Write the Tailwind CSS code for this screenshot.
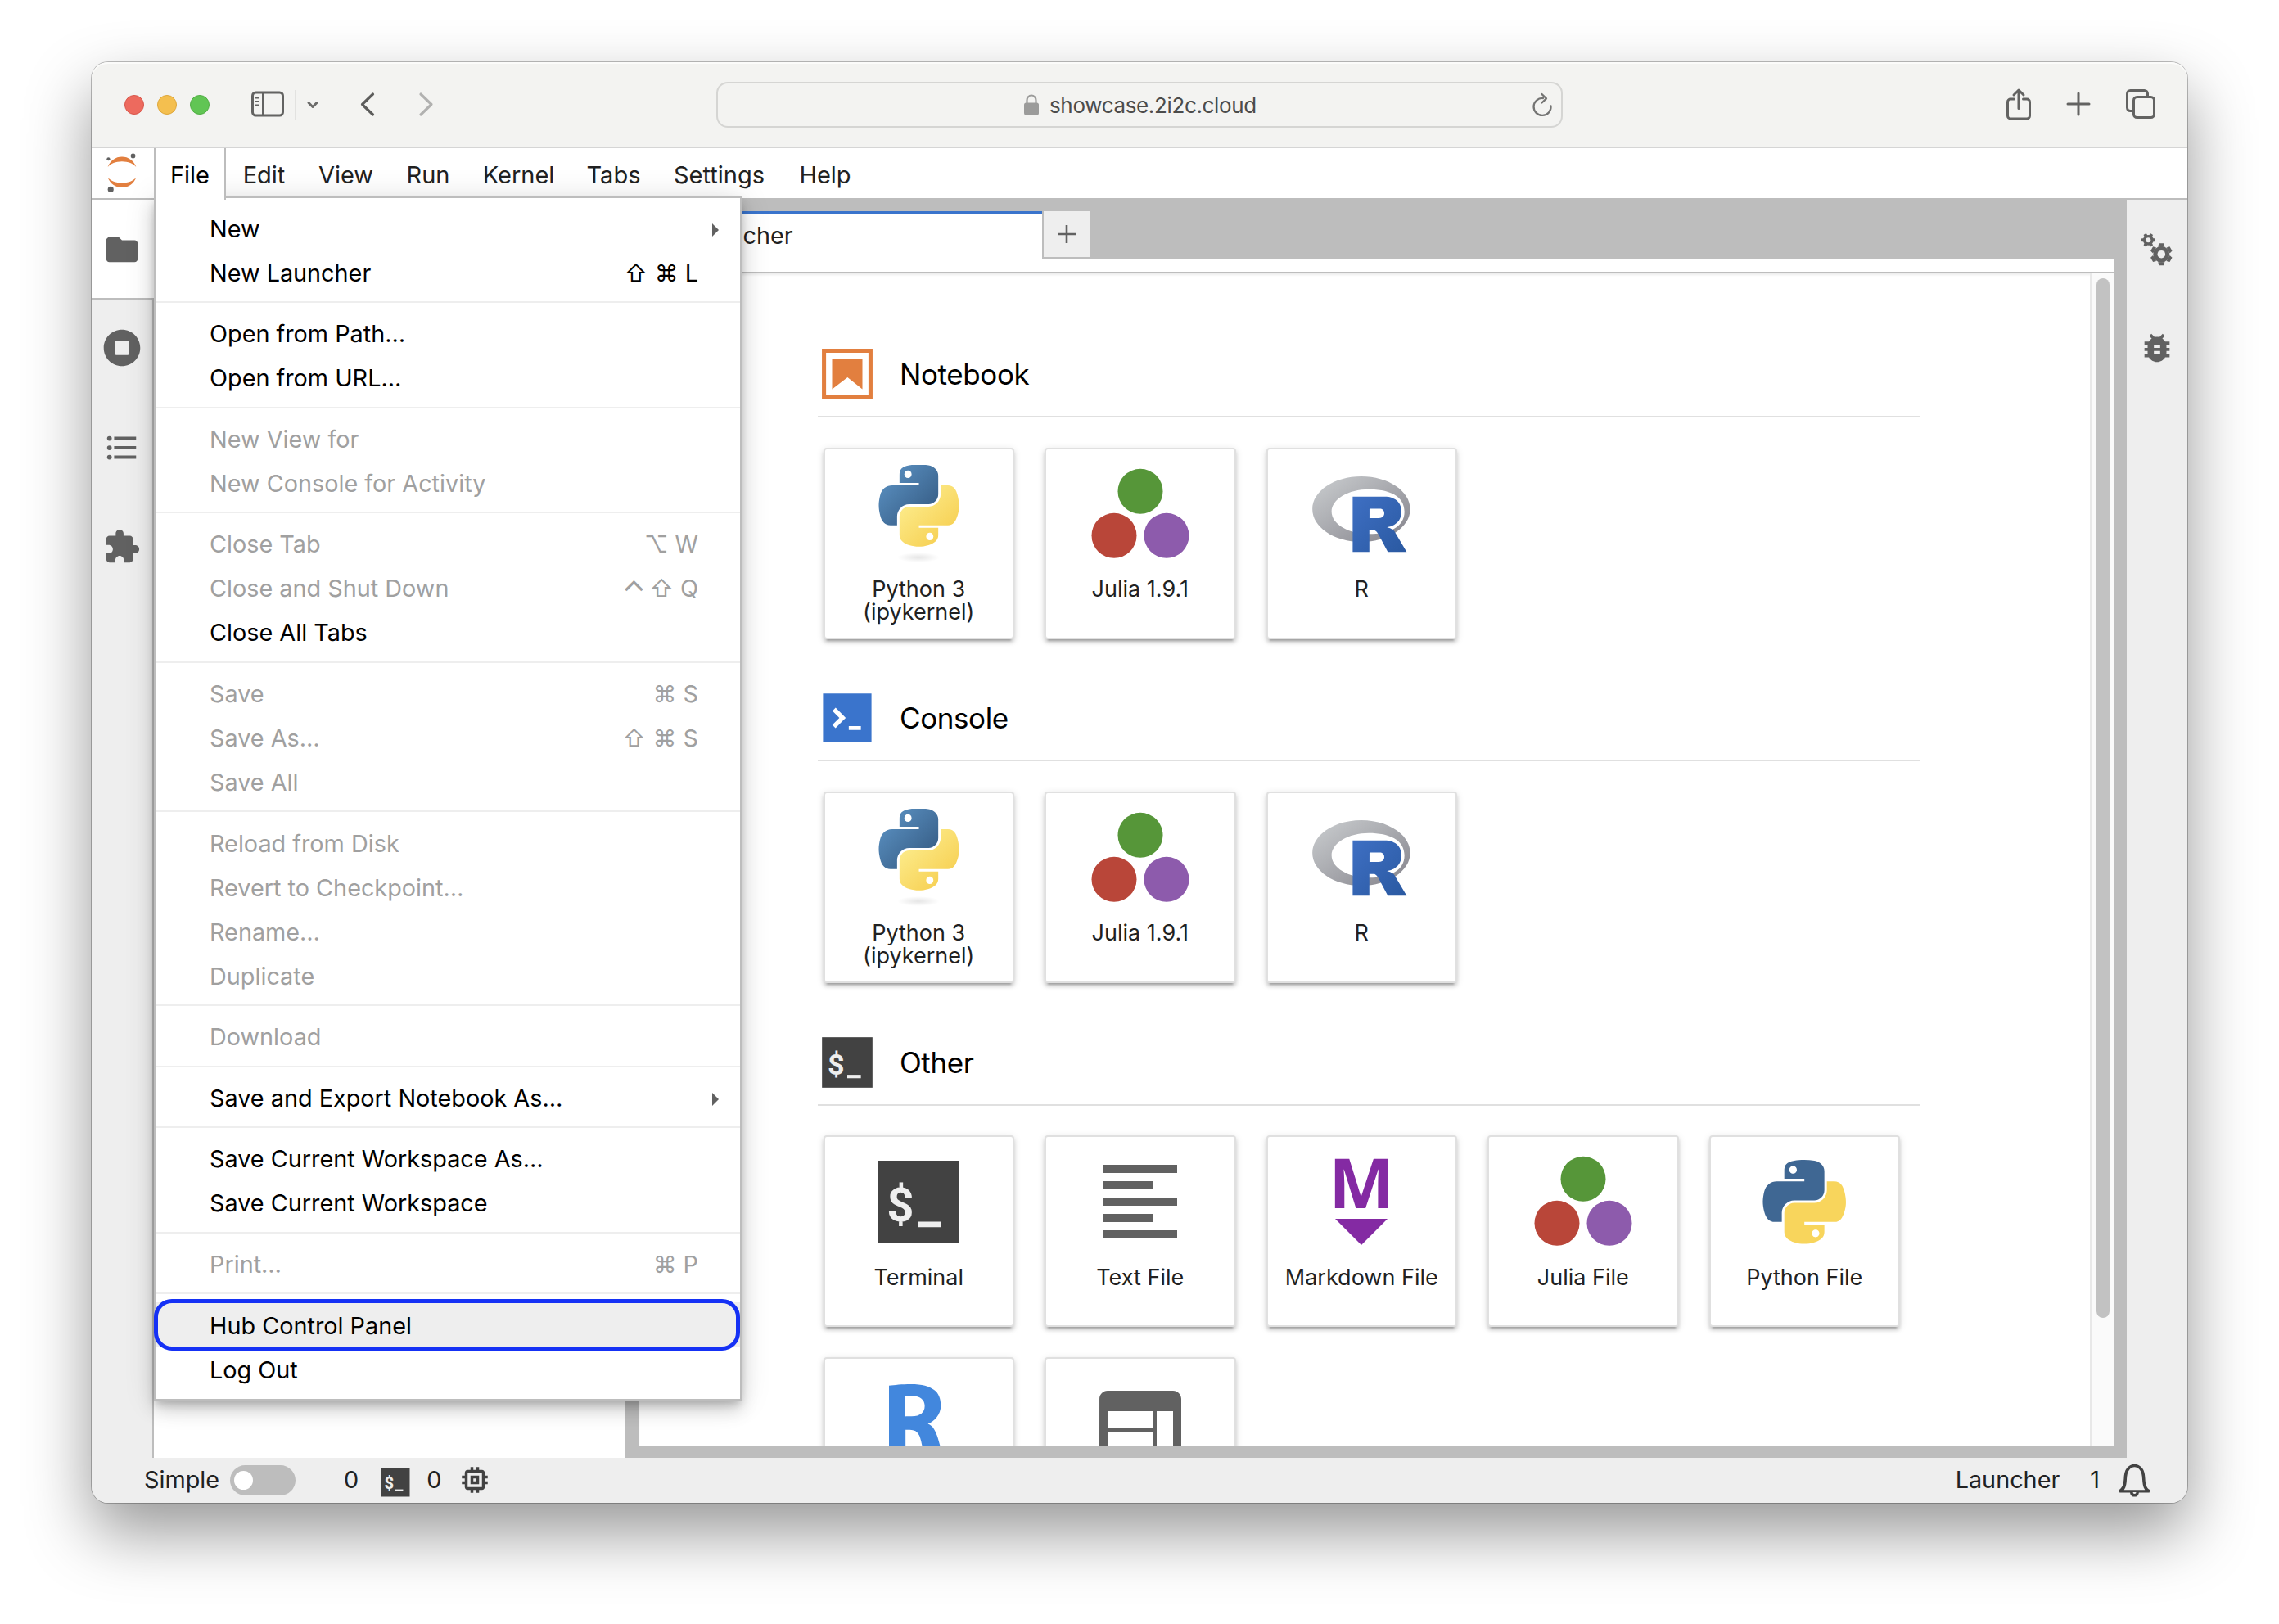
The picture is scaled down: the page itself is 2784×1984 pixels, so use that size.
<!DOCTYPE html>
<html lang="en">
<head>
<meta charset="utf-8">
<title>JupyterLab</title>
<script src="https://cdn.jsdelivr.net/npm/@tailwindcss/browser@4"></script>
</head>
<body class="bg-white font-['Inter',sans-serif] text-[#212121] w-[2784px] h-[1984px] overflow-hidden pt-[76px] pl-[112px]">
<svg width="0" height="0" class="absolute">
  <defs>
    <linearGradient id="pyBlue" x1="0" y1="0" x2="0.75" y2="0.75"><stop offset="0" stop-color="#5f97c9"/><stop offset="1" stop-color="#3c658f"/></linearGradient>
    <linearGradient id="pyYellow" x1="0.2" y1="0.2" x2="0.75" y2="0.8"><stop offset="0" stop-color="#fcea88"/><stop offset="1" stop-color="#f7d257"/></linearGradient>
    <radialGradient id="pyShade"><stop offset="0" stop-color="#000" stop-opacity=".1"/><stop offset="1" stop-color="#000" stop-opacity="0"/></radialGradient>
    <linearGradient id="rGrey" x1="0" y1="0" x2="1" y2="1"><stop offset="0" stop-color="#cbced0"/><stop offset="1" stop-color="#84838b"/></linearGradient>
    <linearGradient id="rBlue" x1="0" y1="0" x2="1" y2="1"><stop offset="0" stop-color="#3e6fc3"/><stop offset="1" stop-color="#2a59a1"/></linearGradient>
    <path id="pyTop" d="M 54.918785,9.1927421e-4 C 50.335132,0.02221727 45.957846,0.41313697 42.106285,1.0946693 30.760069,3.0991731 28.700036,7.2947714 28.700035,15.032169 v 10.21875 h 26.8125 v 3.40625 h -26.8125 -10.0625 c -7.792459,0 -14.6157588,4.683717 -16.7499998,13.59375 -2.46181998,10.212966 -2.57101508,16.586023 0,27.25 1.9059283,7.937852 6.4575432,13.593748 14.2499998,13.59375 h 9.21875 v -12.25 c 0,-8.849902 7.657144,-16.656248 16.75,-16.65625 h 26.78125 c 7.454951,0 13.406253,-6.138164 13.40625,-13.625 v -25.53125 c 0,-7.2663386 -6.12998,-12.7247771 -13.40625,-13.9374997 C 64.281548,0.32794397 59.502438,-0.02037903 54.918785,9.1927421e-4 Z m -14.5,8.21875012579 c 2.769547,0 5.03125,2.2986456 5.03125,5.1249996 -2e-6,2.816336 -2.261703,5.09375 -5.03125,5.09375 -2.779476,-1e-6 -5.03125,-2.277415 -5.03125,-5.09375 -10e-7,-2.826353 2.251774,-5.1249996 5.03125,-5.1249996 z"/>
    <path id="pyBottom" d="m 85.637535,28.657169 v 11.90625 c 0,9.230755 -7.825895,16.999999 -16.75,17 h -26.78125 c -7.335833,0 -13.406249,6.278483 -13.40625,13.625 v 25.531247 c 0,7.266344 6.318588,11.540324 13.40625,13.625004 8.487331,2.49561 16.626237,2.94663 26.78125,0 6.750155,-1.95439 13.406253,-5.88761 13.40625,-13.625004 V 86.500919 h -26.78125 v -3.40625 h 26.78125 13.406254 c 7.792461,0 10.696251,-5.435408 13.406241,-13.59375 2.79933,-8.398886 2.68022,-16.475776 0,-27.25 -1.92578,-7.757441 -5.60387,-13.59375 -13.406241,-13.59375 z m -15.0625,64.65625 c 2.779478,3e-6 5.03125,2.277417 5.03125,5.093747 -2e-6,2.826354 -2.251775,5.125004 -5.03125,5.125004 -2.76955,0 -5.03125,-2.29865 -5.03125,-5.125004 2e-6,-2.81633 2.261697,-5.093747 5.03125,-5.093747 z"/>
    <symbol id="python" viewBox="0 0 120 120">
      <g transform="translate(11.5 -.5) scale(.883 .893)"><use href="#pyTop" fill="url(#pyBlue)"/><use href="#pyBottom" fill="url(#pyYellow)"/></g>
      <ellipse cx="60" cy="113" rx="26" ry="6" fill="url(#pyShade)"/>
    </symbol>
    <symbol id="pythonFile" viewBox="0 0 120 120">
      <g transform="translate(9.5 9) scale(.913)"><use href="#pyTop" fill="#3f6793"/><use href="#pyBottom" fill="#f8d55c"/></g>
    </symbol>
    <symbol id="julia" viewBox="0 0 120 120">
      <circle cx="60" cy="32.3" r="27.5" fill="#569639"/><circle cx="28" cy="86.3" r="27.5" fill="#b94639"/><circle cx="92" cy="86.3" r="27.5" fill="#8d5bac"/>
    </symbol>
    <symbol id="rlogo" viewBox="0 0 724 561">
      <path fill="url(#rGrey)" fill-rule="evenodd" d="M361.453,485.937C162.329,485.937,0.906,377.828,0.906,244.469C0.906,111.109,162.329,3,361.453,3C560.578,3,722,111.109,722,244.469C722,377.828,560.578,485.937,361.453,485.937ZM416.641,97.406C265.289,97.406,142.594,171.314,142.594,262.484C142.594,353.654,265.289,427.562,416.641,427.562C567.992,427.562,679.687,377.033,679.687,262.484C679.687,147.971,567.992,97.406,416.641,97.406Z"/>
      <path fill="url(#rBlue)" fill-rule="evenodd" d="M550,377C550,377,571.822,383.585,584.5,390C588.899,392.226,596.51,396.668,602,402.5C607.378,408.212,610,414,610,414L696,559L557,559.062L492,437C492,437,478.69,414.131,470.5,407.5C463.668,401.969,460.755,400,454,400C449.298,400,420.974,400,420.974,400L421,558.974L298,559.026L298,152.938L545,152.938C545,152.938,657.5,154.967,657.5,262C657.5,369.033,550,377,550,377ZM496.5,241.024L422.037,240.976L422,310.026L496.5,310.002C496.5,310.002,531,309.895,531,274.877C531,239.155,496.5,241.024,496.5,241.024Z"/>
    </symbol>
    <symbol id="terminal" viewBox="0 0 24 24">
      <rect x="2" y="2" width="20" height="20" fill="#424242"/>
      <text x="4.25" y="16.8" font-family="Roboto" font-weight="700" font-size="11.6" fill="#eee">$</text>
      <rect x="12" y="16.9" width="5.4" height="1.35" fill="#eee"/>
    </symbol>
  </defs>
</svg>

<div class="relative flex h-[1760px] w-[2560px] flex-col rounded-[20px] bg-[#eee] shadow-[0_0_0_1px_rgba(0,0,0,0.25),0_36px_80px_rgba(0,0,0,0.41)]">
  <!-- browser toolbar -->
  <div class="flex h-[105px] shrink-0 items-center rounded-t-[20px] border-b border-[#d5d5d5] bg-[#f3f3f1] shadow-[inset_0_2px_0_#fbfbfa]">
    <div class="ml-10 flex gap-4">
      <div class="size-6 rounded-full border border-[#d8574c] bg-[#ed6a5e]"></div>
      <div class="size-6 rounded-full border border-[#dea73c] bg-[#f4bf4f]"></div>
      <div class="size-6 rounded-full border border-[#52ae45] bg-[#61c554]"></div>
    </div>
    <svg class="mt-[-2px] ml-[51px] h-[32px] w-[40px]" viewBox="0 0 40 32" fill="none" stroke="#636362" stroke-width="3"><rect x="1.5" y="2" width="37" height="28" rx="4"/><path d="M14.5 2v28"/><path d="M5 8.500h5M5 13h5M5 17.500h5" stroke-width="2"/></svg>
    <div class="ml-[13px] h-9 w-[2px] bg-[#e2e2e0]"></div>
    <svg class="ml-3 h-3 w-4" viewBox="0 0 16 12" fill="none" stroke="#6b6b6a" stroke-width="3" stroke-linecap="round" stroke-linejoin="round"><path d="M3 3.500l5 5 5-5"/></svg>
    <svg class="mt-[-1px] ml-[49px] h-8 w-5" viewBox="0 0 20 32" fill="none" stroke="#5c5c5b" stroke-width="3.200" stroke-linecap="round" stroke-linejoin="round"><path d="M16.500 3L3.500 15.500l13 12.500"/></svg>
    <svg class="mt-[-1px] ml-[51px] h-8 w-5" viewBox="0 0 20 32" fill="none" stroke="#b1b1b0" stroke-width="3.200" stroke-linecap="round" stroke-linejoin="round"><path d="M4 3l13 12.500L4 28"/></svg>
    <div class="ml-[345px] flex h-14 w-[1034px] items-center rounded-[14px] border-2 border-[#d5d5d3] pr-[10px] pl-[373px]">
      <svg class="h-[26px] w-5" viewBox="0 0 20 26"><rect x="1" y="10.500" width="18" height="15" rx="2.500" fill="#9b9b9a"/><path d="M4.500 11V7.500a5.500 6 0 0 1 11 0V11" fill="none" stroke="#9b9b9a" stroke-width="2.200"/></svg>
      <span class="ml-[12px] text-[26px] tracking-[-0.35px] text-[#4c4c4b]">showcase.2i2c.cloud</span>
      <svg class="ml-auto h-[30px] w-[26px]" viewBox="0 0 26 30" fill="none" stroke="#747473" stroke-width="2.300" stroke-linecap="round" stroke-linejoin="round"><path d="M14 7a10.500 10.500 0 1 0 9.500 9.500"/><path d="M12.500 2l5.500 5.300-5.500 5.200"/></svg>
    </div>
    <svg class="mt-[-3px] ml-[541px] h-10 w-8" viewBox="0 0 32 40" fill="none" stroke="#636362" stroke-width="3" stroke-linecap="round" stroke-linejoin="round"><path d="M10.500 14H6a3.500 3.500 0 0 0-3.500 3.500v17A3.500 3.500 0 0 0 6 38h20a3.500 3.500 0 0 0 3.500-3.500v-17A3.500 3.500 0 0 0 26 14h-4.500"/><path d="M16 25.500V3.500M10 9l6-6 6 6"/></svg>
    <svg class="mt-[-3px] ml-[42px] size-[30px]" viewBox="0 0 30 30" fill="none" stroke="#636362" stroke-width="3" stroke-linecap="round"><path d="M15 2v26M2 15h26"/></svg>
    <svg class="mt-[-3px] ml-[43px] size-9" viewBox="0 0 36 36" fill="none" stroke="#636362" stroke-width="3"><rect x="9.500" y="9.500" width="25" height="25" rx="4"/><path d="M26.500 9V5.500a4 4 0 0 0-4-4h-17a4 4 0 0 0-4 4v17a4 4 0 0 0 4 4H9"/></svg>
  </div>

  <!-- application menu bar -->
  <div class="flex h-[63px] shrink-0 border-b-2 border-[#bdbdbd] bg-white text-[29px]">
    <div class="flex w-[76px] items-center justify-center">
      <svg class="mr-[3px] h-[49px] w-[37px]" viewBox="0 0 39 51"><g fill="#e27f3f"><path transform="translate(1.74 30.98)" d="M18.265 7.134C10.415 7.134 3.559 4.258 0 0c1.325 3.820 3.796 7.131 7.069 9.473a19.260 19.260 0 0 0 22.400 0C32.742 7.131 35.213 3.820 36.538 0c-3.567 4.258-10.423 7.134-18.273 7.134z"/><path transform="translate(1.73 4.48)" d="M18.273 5.939c7.850 0 14.706 2.877 18.265 7.134-1.325-3.820-3.796-7.130-7.069-9.473a19.260 19.260 0 0 0-22.400 0C3.796 5.943 1.325 9.253 0 13.073c3.567-4.248 10.423-7.134 18.273-7.134z"/></g><g fill="#616161"><circle cx="34.300" cy="3.300" r="3"/><circle cx="5.500" cy="46.500" r="3.750"/><circle cx="2.600" cy="7.300" r="2.200"/></g></svg>
    </div>
    <div class="relative z-30 mb-[-2px] flex w-[88px] items-center justify-center border-x-2 border-[#bdbdbd] bg-white pt-[2px] text-black">File</div>
    <div class="flex w-[93px] items-center justify-center pt-1">Edit</div>
    <div class="flex w-[107px] items-center justify-center pt-1">View</div>
    <div class="flex w-[94px] items-center justify-center pt-1">Run</div>
    <div class="flex w-[127px] items-center justify-center pt-1">Kernel</div>
    <div class="flex w-[105px] items-center justify-center pt-1">Tabs</div>
    <div class="flex w-[153px] items-center justify-center pt-1">Settings</div>
    <div class="flex w-[106px] items-center justify-center pt-1">Help</div>
  </div>

  <!-- work area -->
  <div class="flex h-[1537px] shrink-0">
    <div class="flex w-[76px] shrink-0 flex-col border-r-2 border-[#bdbdbd] bg-[#eee]">
      <div class="mr-[-2px] flex h-[122px] items-center justify-center border-b-2 border-[#bdbdbd] bg-white pt-[2px] pr-[2px]"><svg class="size-[46px]" viewBox="0 0 24 24" fill="#616161"><path d="M10 4H4c-1.100 0-1.990.9-1.990 2L2 18c0 1.100.9 2 2 2h16c1.100 0 2-.9 2-2V8c0-1.100-.9-2-2-2h-8l-2-2z"/></svg></div>
      <div class="flex h-[121px] items-center justify-center pb-[3px]"><svg class="size-[46px]" viewBox="0 0 512 512" fill="#616161"><path d="M256 8C119 8 8 119 8 256s111 248 248 248 248-111 248-248S393 8 256 8zm96 328c0 8.800-7.200 16-16 16H176c-8.800 0-16-7.200-16-16V176c0-8.800 7.200-16 16-16h160c8.800 0 16 7.200 16 16v160z"/></svg></div>
      <div class="flex h-[121px] items-center justify-center pb-[2px]"><svg class="size-[46px]" viewBox="0 0 24 24" fill="#616161"><path d="M7 5h14v2H7zM7 11h14v2H7zM7 17h14v2H7z"/><circle cx="4" cy="6" r="1.500"/><circle cx="4" cy="12" r="1.500"/><circle cx="4" cy="18" r="1.500"/></svg></div>
      <div class="flex h-[121px] items-center justify-center pb-[1px]"><svg class="size-[46px]" viewBox="0 0 24 24" fill="#616161"><path d="M20.500 11H19V7c0-1.100-.9-2-2-2h-4V3.500C13 2.120 11.880 1 10.500 1S8 2.120 8 3.500V5H4c-1.100 0-1.990.9-1.990 2v3.800H3.500c1.490 0 2.700 1.210 2.700 2.700s-1.210 2.700-2.700 2.700H2V20c0 1.100.9 2 2 2h3.800v-1.500c0-1.490 1.210-2.700 2.700-2.700 1.490 0 2.700 1.210 2.700 2.700V22H17c1.100 0 2-.9 2-2v-4h1.500c1.380 0 2.500-1.120 2.500-2.500S21.880 11 20.500 11z"/></svg></div>
    </div>
    <div class="w-[575px] shrink-0 bg-white"></div>
    <div class="flex w-[1835px] shrink-0 flex-col bg-[#bdbdbd] pr-4 pb-[14px] pl-[18px]">
      <div class="flex h-[72px] shrink-0 pt-[14px] text-[28.800px]">
        <div class="flex w-[492px] items-center border-t-4 border-[#3a74cc] bg-white pl-[60px]"><span class="mt-[-3px]">Launcher</span></div>
        <div class="mb-[2px] ml-[2px] flex w-14 items-center justify-center bg-[#eee]"><svg class="size-[22px]" viewBox="0 0 22 22" stroke="#616161" stroke-width="2.600"><path d="M11 0v22M0 11h22"/></svg></div>
      </div>
      <div class="h-[18px] shrink-0 border-b-2 border-[#bdbdbd] bg-white"></div>
      <div class="flex h-[1433px] overflow-hidden bg-white shadow-[inset_0_3px_3px_-1px_rgba(0,0,0,0.08)]">
        <div class="flex w-[1772px] shrink-0 flex-col gap-[59.800px] pt-[86.200px] pl-[218px] text-[27px]">
          <section class="w-[1347px]">
            <div class="flex h-[90px] items-start border-b-2 border-[#e0e0e0]">
              <svg class="ml-[-1px] size-[74px]" viewBox="0 0 22 22" fill="#e27f3f"><path d="M18.700 3.300v15.400H3.300V3.300h15.400m1.500-1.500H1.800v18.400h18.400z"/><path d="M16.500 16.500l-5.400-4.300-5.600 4.300v-11h11z"/></svg>
              <h2 class="ml-[27px] h-[74px] text-[35px] leading-[75px] tracking-[-0.4px] text-black">Notebook</h2>
            </div>
            <div class="mt-[36.400px] flex gap-[37px] pl-[6.500px]">
              <div class="flex h-[234px] w-[233.500px] flex-col items-center rounded border-2 border-[#e0e0e0] bg-white pt-[19px] shadow-[0_6px_2px_-4px_rgba(0,0,0,0.2),0_4px_4px_rgba(0,0,0,0.14),0_2px_10px_rgba(0,0,0,0.12)]"><svg class="size-[120px] shrink-0"><use href="#python"/></svg><div class="mt-[18.600px] text-center leading-7">Python 3<br>(ipykernel)</div></div>
              <div class="flex h-[234px] w-[233.500px] flex-col items-center rounded border-2 border-[#e0e0e0] bg-white pt-[19px] shadow-[0_6px_2px_-4px_rgba(0,0,0,0.2),0_4px_4px_rgba(0,0,0,0.14),0_2px_10px_rgba(0,0,0,0.12)]"><svg class="size-[120px] shrink-0"><use href="#julia"/></svg><div class="mt-[18.600px] text-center leading-7">Julia 1.9.1</div></div>
              <div class="flex h-[234px] w-[233.500px] flex-col items-center rounded border-2 border-[#e0e0e0] bg-white pt-[19px] shadow-[0_6px_2px_-4px_rgba(0,0,0,0.2),0_4px_4px_rgba(0,0,0,0.14),0_2px_10px_rgba(0,0,0,0.12)]"><svg class="size-[120px] shrink-0"><use href="#rlogo"/></svg><div class="mt-[18.600px] text-center leading-7">R</div></div>
            </div>
          </section>
          <section class="w-[1347px]">
            <div class="flex h-[90px] items-start border-b-2 border-[#e0e0e0]">
              <svg class="ml-[-1px] size-[74px]" viewBox="0 0 200 200"><path fill="#3a74cc" d="M20 19.800h160v159.900H20z"/><path fill="#fff" d="M105 127.300h40v12.800h-40zM51.100 77L74 99.900l-23.300 23.300 10.500 10.500 23.300-23.300L95 99.900 84.500 89.400 61.600 66.500z"/></svg>
              <h2 class="ml-[27px] h-[74px] text-[35px] leading-[75px] tracking-[-0.4px] text-black">Console</h2>
            </div>
            <div class="mt-[36.400px] flex gap-[37px] pl-[6.500px]">
              <div class="flex h-[234px] w-[233.500px] flex-col items-center rounded border-2 border-[#e0e0e0] bg-white pt-[19px] shadow-[0_6px_2px_-4px_rgba(0,0,0,0.2),0_4px_4px_rgba(0,0,0,0.14),0_2px_10px_rgba(0,0,0,0.12)]"><svg class="size-[120px] shrink-0"><use href="#python"/></svg><div class="mt-[18.600px] text-center leading-7">Python 3<br>(ipykernel)</div></div>
              <div class="flex h-[234px] w-[233.500px] flex-col items-center rounded border-2 border-[#e0e0e0] bg-white pt-[19px] shadow-[0_6px_2px_-4px_rgba(0,0,0,0.2),0_4px_4px_rgba(0,0,0,0.14),0_2px_10px_rgba(0,0,0,0.12)]"><svg class="size-[120px] shrink-0"><use href="#julia"/></svg><div class="mt-[18.600px] text-center leading-7">Julia 1.9.1</div></div>
              <div class="flex h-[234px] w-[233.500px] flex-col items-center rounded border-2 border-[#e0e0e0] bg-white pt-[19px] shadow-[0_6px_2px_-4px_rgba(0,0,0,0.2),0_4px_4px_rgba(0,0,0,0.14),0_2px_10px_rgba(0,0,0,0.12)]"><svg class="size-[120px] shrink-0"><use href="#rlogo"/></svg><div class="mt-[18.600px] text-center leading-7">R</div></div>
            </div>
          </section>
          <section class="w-[1347px]">
            <div class="flex h-[90px] items-start border-b-2 border-[#e0e0e0]">
              <svg class="ml-[-1px] size-[74px]"><use href="#terminal"/></svg>
              <h2 class="ml-[27px] h-[74px] text-[35px] leading-[75px] tracking-[-0.4px] text-black">Other</h2>
            </div>
            <div class="mt-[36.400px] flex flex-wrap gap-[37px] pl-[6.500px]">
              <div class="flex h-[234px] w-[233.500px] flex-col items-center rounded border-2 border-[#e0e0e0] bg-white pt-[19px] shadow-[0_6px_2px_-4px_rgba(0,0,0,0.2),0_4px_4px_rgba(0,0,0,0.14),0_2px_10px_rgba(0,0,0,0.12)]"><svg class="size-[120px] shrink-0"><use href="#terminal"/></svg><div class="mt-[18.600px] text-center leading-7">Terminal</div></div>
              <div class="flex h-[234px] w-[233.500px] flex-col items-center rounded border-2 border-[#e0e0e0] bg-white pt-[19px] shadow-[0_6px_2px_-4px_rgba(0,0,0,0.2),0_4px_4px_rgba(0,0,0,0.14),0_2px_10px_rgba(0,0,0,0.12)]"><svg class="size-[120px] shrink-0" viewBox="0 0 24 24" fill="#616161"><path d="M15 15H3v2h12v-2zm0-8H3v2h12V7zM3 13h18v-2H3v2zm0 8h18v-2H3v2zM3 3v2h18V3H3z"/></svg><div class="mt-[18.600px] text-center leading-7">Text File</div></div>
              <div class="flex h-[234px] w-[233.500px] flex-col items-center rounded border-2 border-[#e0e0e0] bg-white pt-[19px] shadow-[0_6px_2px_-4px_rgba(0,0,0,0.2),0_4px_4px_rgba(0,0,0,0.14),0_2px_10px_rgba(0,0,0,0.12)]"><svg class="size-[120px] shrink-0" viewBox="0 0 120 120" fill="#842aa3"><text x="60" y="67.500" text-anchor="middle" font-family="Open Sans" font-weight="700" font-size="84.500">M</text><path d="M28 81h64l-32 32z"/></svg><div class="mt-[18.600px] text-center leading-7">Markdown File</div></div>
              <div class="flex h-[234px] w-[233.500px] flex-col items-center rounded border-2 border-[#e0e0e0] bg-white pt-[19px] shadow-[0_6px_2px_-4px_rgba(0,0,0,0.2),0_4px_4px_rgba(0,0,0,0.14),0_2px_10px_rgba(0,0,0,0.12)]"><svg class="size-[120px] shrink-0"><use href="#julia"/></svg><div class="mt-[18.600px] text-center leading-7">Julia File</div></div>
              <div class="flex h-[234px] w-[233.500px] flex-col items-center rounded border-2 border-[#e0e0e0] bg-white pt-[19px] shadow-[0_6px_2px_-4px_rgba(0,0,0,0.2),0_4px_4px_rgba(0,0,0,0.14),0_2px_10px_rgba(0,0,0,0.12)]"><svg class="size-[120px] shrink-0"><use href="#pythonFile"/></svg><div class="mt-[18.600px] text-center leading-7">Python File</div></div>
              <div class="flex h-[234px] w-[233.500px] flex-col items-center rounded border-2 border-[#e0e0e0] bg-white pt-[19px] shadow-[0_6px_2px_-4px_rgba(0,0,0,0.2),0_4px_4px_rgba(0,0,0,0.14),0_2px_10px_rgba(0,0,0,0.12)]"><svg class="size-[120px] shrink-0" viewBox="0 0 22 22" fill="#4287dd"><path d="M4.400 2.500c1.200-.1 2.900-.3 4.900-.3 2.500 0 4.100.4 5.200 1.300 1 .7 1.500 1.900 1.500 3.500 0 2-1.400 3.500-2.900 4.100 1.200.4 1.700 1.600 2.200 3 .6 1.900 1 3.900 1.300 4.600h-3.800c-.3-.4-.8-1.700-1.200-3.700s-1.200-2.600-2.600-2.600h-.9v6.400H4.400V2.500zm3.700 6.900h1.400c1.900 0 2.900-.9 2.900-2.300s-1-2.300-2.800-2.300c-.7 0-1.300 0-1.600.2v4.500h.1v-.1z"/></svg></div>
              <div class="flex h-[234px] w-[233.500px] flex-col items-center rounded border-2 border-[#e0e0e0] bg-white pt-[19px] shadow-[0_6px_2px_-4px_rgba(0,0,0,0.2),0_4px_4px_rgba(0,0,0,0.14),0_2px_10px_rgba(0,0,0,0.12)]"><svg class="size-[120px] shrink-0" viewBox="0 0 24 24" fill="#616161"><path d="M20 4H4c-1.100 0-1.990.9-1.990 2L2 18c0 1.100.9 2 2 2h16c1.100 0 2-.9 2-2V6c0-1.100-.9-2-2-2zm-5 14H4v-4h11v4zm0-5H4V9h11v4zm5 5h-4V9h4v9z"/></svg></div>
            </div>
          </section>
        </div>
        <div class="flex w-[29px] shrink-0 justify-end border-l-2 border-[#e8e8e8] bg-[#fafafa] pt-[6px] pr-[5px]"><div class="h-[1270px] w-4 rounded-full bg-[#c2c2c2]"></div></div>
      </div>
    </div>
    <div class="flex w-[74px] shrink-0 flex-col bg-[#eee]">
      <div class="flex h-[122px] items-center justify-center"><svg class="size-[46px]" viewBox="0 0 46 46"><g fill="#616161"><circle cx="28.300" cy="28.700" r="10"/><g id="bt"><path d="M25.300 15.200h6l1 4h-8zM25.300 42.200h6l1-4h-8z"/></g><use href="#bt" transform="rotate(60 28.300 28.700)"/><use href="#bt" transform="rotate(120 28.300 28.700)"/><circle cx="12.300" cy="11.300" r="6.400"/><g id="st"><rect x="3.800" y="9.300" width="17" height="4" rx="1"/></g><use href="#st" transform="rotate(60 12.300 11.300)"/><use href="#st" transform="rotate(120 12.300 11.300)"/></g><g fill="#eee"><circle cx="28.300" cy="28.700" r="4.800"/><circle cx="12.300" cy="11.300" r="3"/></g></svg></div>
      <div class="flex h-[120px] items-center justify-center pb-[2px]"><svg class="size-[46px]" viewBox="0 0 24 24" fill="#616161"><path d="M20 8h-2.810c-.45-.78-1.070-1.450-1.820-1.960L17 4.410 15.590 3l-2.170 2.170C12.960 5.060 12.490 5 12 5c-.49 0-.96.06-1.410.17L8.410 3 7 4.410l1.620 1.630C7.880 6.550 7.260 7.220 6.810 8H4v2h2.090c-.05.33-.09.66-.09 1v1H4v2h2v1c0 .34.04.67.09 1H4v2h2.810c1.040 1.790 2.970 3 5.190 3s4.150-1.210 5.190-3H20v-2h-2.090c.05-.33.09-.66.09-1v-1h2v-2h-2v-1c0-.34-.04-.67-.09-1H20V8zm-6 8h-4v-2h4v2zm0-4h-4v-2h4v2z"/></svg></div>
    </div>
  </div>

  <!-- status bar -->
  <div class="flex h-[55px] items-center rounded-b-[20px] bg-[#eee] pb-[1px] pl-[64px] text-[28.800px]">
    <span class="w-[105px]">Simple</span>
    <div class="flex h-[37px] w-20 items-center rounded-full bg-[#bdbdbd] pl-[5px]"><div class="size-[23px] rounded-full bg-white"></div></div>
    <span class="ml-[59px]">0</span>
    <svg class="ml-[24px] mt-[5px] size-[42px]"><use href="#terminal"/></svg>
    <span class="ml-[17px]">0</span>
    <svg class="ml-[20px] size-[42px]" viewBox="0 0 24 24" fill="#424242"><path d="M15 9H9v6h6V9zm-2 4h-2v-2h2v2zm8-2V9h-2V7c0-1.100-.9-2-2-2h-2V3h-2v2h-2V3H9v2H7c-1.100 0-2 .9-2 2v2H3v2h2v2H3v2h2v2c0 1.100.9 2 2 2h2v2h2v-2h2v2h2v-2h2c1.100 0 2-.9 2-2v-2h2v-2h-2v-2h2zm-4 6H7V7h10v10z"/></svg>
    <span class="ml-auto">Launcher</span>
    <span class="ml-[37px]">1</span>
    <svg class="mr-[44px] ml-[22px] size-[41px]" viewBox="0 0 16 16" fill="#424242"><path d="m8 .29c-1.400 0-2.700.73-3.600 1.800-1.200 1.500-1.400 3.400-1.500 5.200-.18 2.200-.44 4-2.300 5.300l.28 1.300h5c.026.66.32 1.100.71 1.500.84.61 2 .61 2.800 0 .52-.4.6-1 .71-1.500h5l.28-1.300c-1.900-.97-2.200-3.300-2.300-5.300-.13-1.800-.26-3.700-1.500-5.200-.85-1-2.200-1.800-3.600-1.800zm0 1.400c.88 0 1.900.55 2.500 1.300.88 1.100 1.100 2.700 1.200 4.400.13 1.700.23 3.600 1.300 5.200h-10c1.100-1.600 1.200-3.400 1.300-5.200.13-1.700.3-3.300 1.200-4.400.59-.72 1.600-1.300 2.500-1.300zm-.74 12h1.500c-.0015.28.015.79-.74.79-.73.0016-.72-.53-.74-.79z"/></svg>
  </div>

  <!-- File menu -->
  <div class="absolute top-[164px] left-[76px] z-20 flex h-[1471px] w-[718px] flex-col border-2 border-[#bdbdbd] bg-white pt-[8.700px] text-[28.800px] text-black shadow-[0_6px_10px_-2px_rgba(0,0,0,0.2),0_12px_20px_rgba(0,0,0,0.14),0_2px_36px_rgba(0,0,0,0.12)]">
    <div class="flex h-[54px] shrink-0 items-center justify-between pt-[3px] pr-[26px] pl-[66px]"><span>New</span><svg class="mt-[3px] h-4 w-2" viewBox="0 0 8 16" fill="#616161"><path d="M0 0l8 8-8 8z"/></svg></div>
    <div class="flex h-[54px] shrink-0 items-center justify-between pt-[3px] pr-[51px] pl-[66px]"><span>New Launcher</span><span>⇧ ⌘ L</span></div>
    <div class="my-[9.300px] h-[2px] shrink-0 bg-[#eee]"></div>
    <div class="flex h-[54px] shrink-0 items-center pt-[3px] pl-[66px]">Open from Path…</div>
    <div class="flex h-[54px] shrink-0 items-center pt-[3px] pl-[66px]">Open from URL…</div>
    <div class="my-[9.300px] h-[2px] shrink-0 bg-[#eee]"></div>
    <div class="flex h-[54px] shrink-0 items-center pt-[3px] pl-[66px] text-[#a0a0a0]">New View for</div>
    <div class="flex h-[54px] shrink-0 items-center pt-[3px] pl-[66px] text-[#a0a0a0]">New Console for Activity</div>
    <div class="my-[9.300px] h-[2px] shrink-0 bg-[#eee]"></div>
    <div class="flex h-[54px] shrink-0 items-center justify-between pt-[3px] pr-[51px] pl-[66px] text-[#a0a0a0]"><span>Close Tab</span><span>⌥ W</span></div>
    <div class="flex h-[54px] shrink-0 items-center justify-between pt-[3px] pr-[51px] pl-[66px] text-[#a0a0a0]"><span>Close and Shut Down</span><span class="flex items-center"><span class="mt-[8px] mr-[4px] text-[38px] leading-none">⌃</span>⇧ Q</span></div>
    <div class="flex h-[54px] shrink-0 items-center pt-[3px] pl-[66px]">Close All Tabs</div>
    <div class="my-[9.300px] h-[2px] shrink-0 bg-[#eee]"></div>
    <div class="flex h-[54px] shrink-0 items-center justify-between pt-[3px] pr-[51px] pl-[66px] text-[#a0a0a0]"><span>Save</span><span>⌘ S</span></div>
    <div class="flex h-[54px] shrink-0 items-center justify-between pt-[3px] pr-[51px] pl-[66px] text-[#a0a0a0]"><span>Save As…</span><span>⇧ ⌘ S</span></div>
    <div class="flex h-[54px] shrink-0 items-center pt-[3px] pl-[66px] text-[#a0a0a0]">Save All</div>
    <div class="my-[9.300px] h-[2px] shrink-0 bg-[#eee]"></div>
    <div class="flex h-[54px] shrink-0 items-center pt-[3px] pl-[66px] text-[#a0a0a0]">Reload from Disk</div>
    <div class="flex h-[54px] shrink-0 items-center pt-[3px] pl-[66px] text-[#a0a0a0]">Revert to Checkpoint…</div>
    <div class="flex h-[54px] shrink-0 items-center pt-[3px] pl-[66px] text-[#a0a0a0]">Rename…</div>
    <div class="flex h-[54px] shrink-0 items-center pt-[3px] pl-[66px] text-[#a0a0a0]">Duplicate</div>
    <div class="my-[9.300px] h-[2px] shrink-0 bg-[#eee]"></div>
    <div class="flex h-[54px] shrink-0 items-center pt-[3px] pl-[66px] text-[#a0a0a0]">Download</div>
    <div class="my-[9.300px] h-[2px] shrink-0 bg-[#eee]"></div>
    <div class="flex h-[54px] shrink-0 items-center justify-between pt-[3px] pr-[26px] pl-[66px]"><span>Save and Export Notebook As…</span><svg class="mt-[3px] h-4 w-2" viewBox="0 0 8 16" fill="#616161"><path d="M0 0l8 8-8 8z"/></svg></div>
    <div class="my-[9.300px] h-[2px] shrink-0 bg-[#eee]"></div>
    <div class="flex h-[54px] shrink-0 items-center pt-[3px] pl-[66px]">Save Current Workspace As…</div>
    <div class="flex h-[54px] shrink-0 items-center pt-[3px] pl-[66px]">Save Current Workspace</div>
    <div class="my-[9.300px] h-[2px] shrink-0 bg-[#eee]"></div>
    <div class="flex h-[54px] shrink-0 items-center justify-between pt-[3px] pr-[51px] pl-[66px] text-[#a0a0a0]"><span>Print…</span><span>⌘ P</span></div>
    <div class="my-[9.300px] h-[2px] shrink-0 bg-[#eee]"></div>
    <div class="relative flex h-[54px] shrink-0 items-center bg-[#eee] pt-[3px] pl-[66px]">Hub Control Panel<div class="absolute top-[-4px] -left-[2px] h-[63px] w-[716px] rounded-[22px] border-[5px] border-[#1531f5]"></div></div>
    <div class="flex h-[54px] shrink-0 items-center pt-[3px] pl-[66px]">Log Out</div>
  </div>
</div>
</body>
</html>
